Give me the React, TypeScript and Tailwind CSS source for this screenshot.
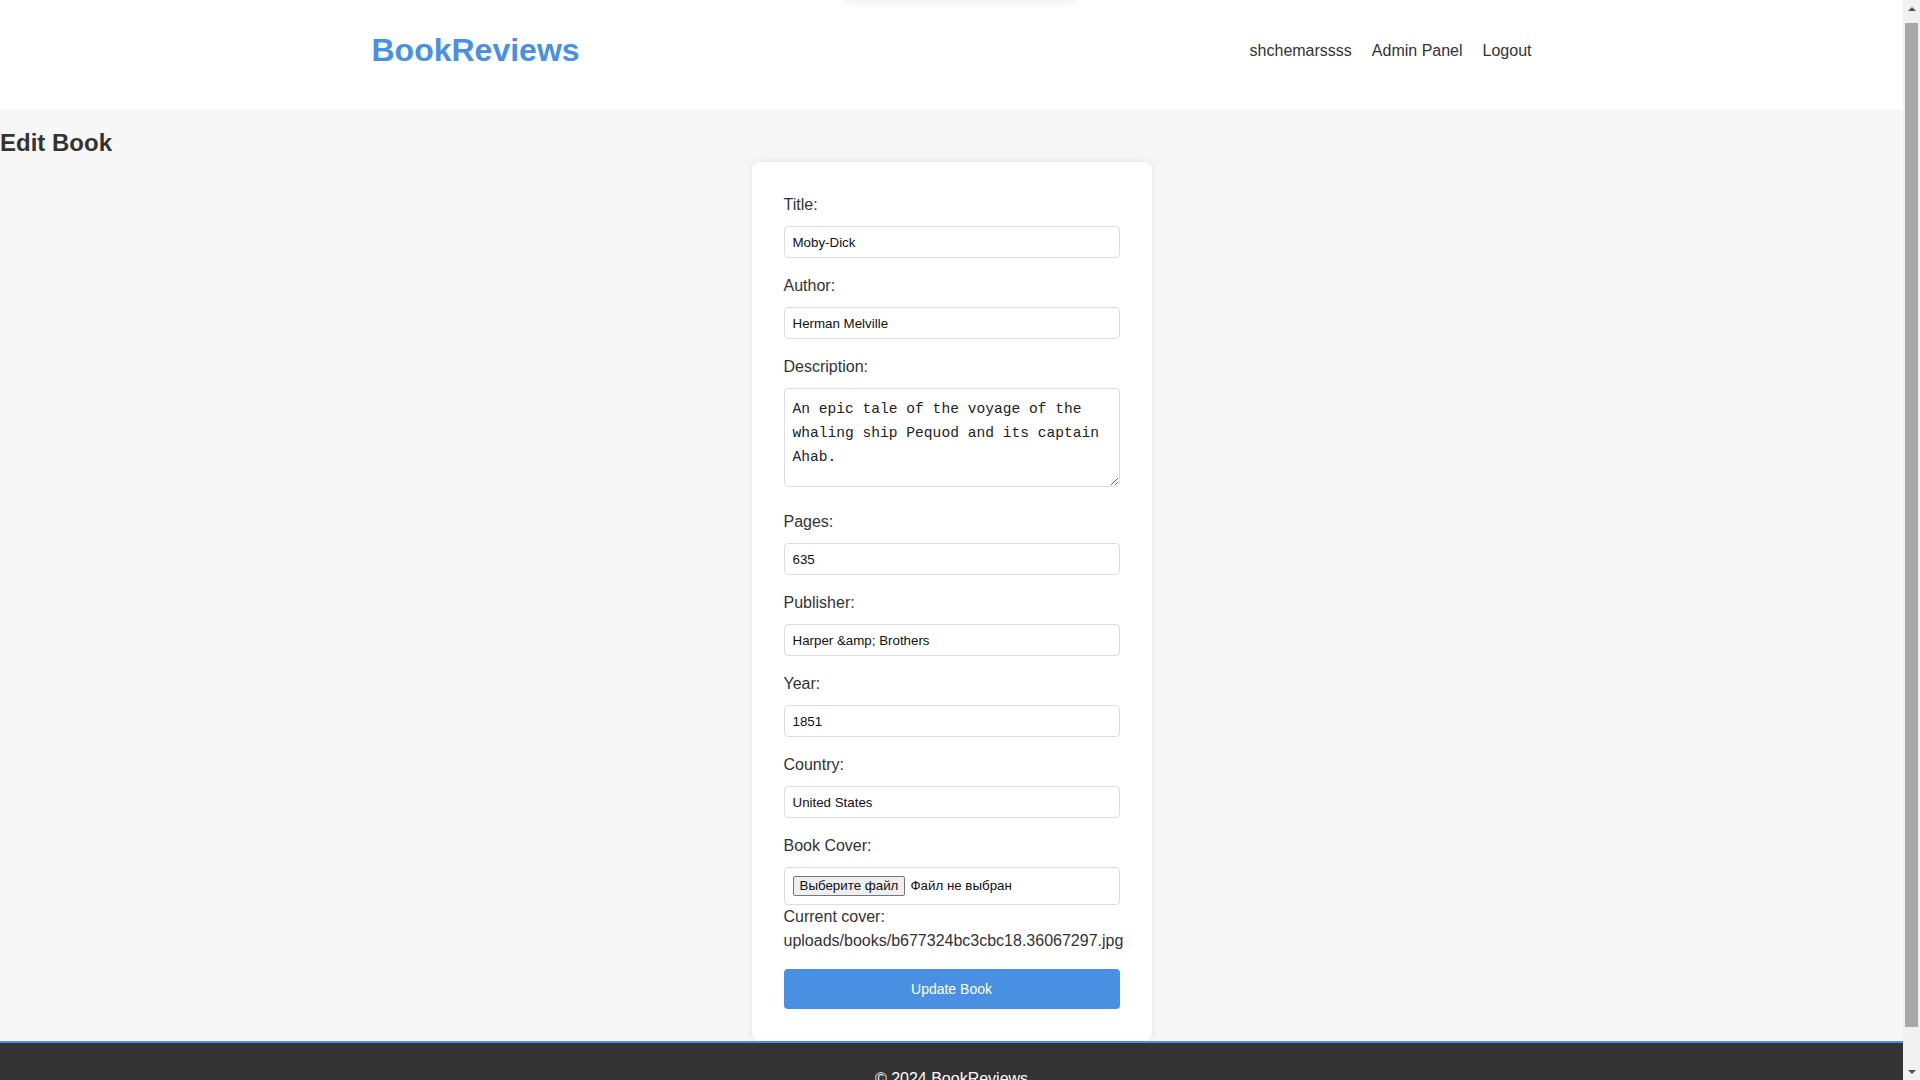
import React from 'react';

const fields = [
  { label: 'Title:', value: 'Moby-Dick' },
  { label: 'Author:', value: 'Herman Melville' },
];

const fields2 = [
  { label: 'Pages:', value: '635' },
  { label: 'Publisher:', value: 'Harper &amp; Brothers' },
  { label: 'Year:', value: '1851' },
  { label: 'Country:', value: 'United States' },
];

function Field({ label, value }: { label: string; value: string }) {
  return (
    <div className="mb-4">
      <label className="block text-base leading-6 mb-[9px] text-[#333]">{label}</label>
      <input
        type="text"
        defaultValue={value}
        className="block w-full h-8 px-2 border border-[#ddd] rounded text-[13.33px] text-[#111] outline-none bg-white"
      />
    </div>
  );
}

// classic window scrollbar, the page is a bit taller than the viewport
function Scrollbar() {
  return (
    <aside className="w-[17px] h-screen bg-[#f1f1f1] flex flex-col items-center shrink-0">
      <div className="h-[17px] flex items-center justify-center">
        <div className="w-0 h-0 border-l-[4px] border-r-[4px] border-b-[4px] border-l-transparent border-r-transparent border-b-[#505050]" />
      </div>
      <div className="w-[13px] h-[1004px] mt-[6px] bg-[#a8a8a8]" />
      <div className="flex-1" />
      <div className="h-[17px] flex items-center justify-center">
        <div className="w-0 h-0 border-l-[4px] border-r-[4px] border-t-[4px] border-l-transparent border-r-transparent border-t-[#505050]" />
      </div>
    </aside>
  );
}

export default function App() {
  return (
    <div
      className="flex h-screen overflow-hidden bg-[#f7f7f7] text-[#333]"
      style={{ fontFamily: '"Liberation Sans", Arial, sans-serif' }}
    >
      <div className="relative flex-1 h-screen overflow-y-auto">
        {/* faint shadow of something above the fold */}
        <div className="absolute left-[843px] top-[-20px] w-[234px] h-[20px] bg-white shadow-[0_2px_8px_rgba(0,0,0,0.07)] z-10" />

        {/* Header */}
        <header className="bg-white h-[109px]">
          <div className="max-w-[1200px] mx-auto px-5 pt-[32px] flex items-center justify-between">
            <a className="text-[32px] font-bold text-[#4a90e2] leading-[37px]">BookReviews</a>
            <nav className="flex items-center gap-5 text-base text-[#333]">
              <a>shchemarssss</a>
              <a>Admin Panel</a>
              <a>Logout</a>
            </nav>
          </div>
        </header>

        <main>
          <h2 className="text-2xl font-bold leading-9 mt-4 mb-px text-[#333]">Edit Book</h2>

          <div className="w-[400px] mx-auto bg-white rounded-lg shadow-[0_0_10px_rgba(0,0,0,0.08)] px-8 pt-[31px] pb-8">
            {fields.map((f) => (
              <Field key={f.label} {...f} />
            ))}

            <div className="mb-[23px]">
              <label className="block text-base leading-6 mb-[9px] text-[#333]">Description:</label>
              <textarea
                defaultValue="An epic tale of the voyage of the whaling ship Pequod and its captain Ahab."
                className="block w-full h-[99px] px-2 py-2 border border-[#ddd] rounded text-[14.6px] leading-6 text-[#222] outline-none bg-white"
                style={{ fontFamily: '"Liberation Mono", monospace', resize: 'vertical' }}
              />
            </div>

            {fields2.map((f) => (
              <Field key={f.label} {...f} />
            ))}

            <div className="mb-4">
              <label className="block text-base leading-6 mb-[9px] text-[#333]">Book Cover:</label>
              <div className="flex items-center h-[38px] px-2 border border-[#ddd] rounded text-[13.33px] text-[#111] bg-white">
                <span className="h-5 px-[6px] flex items-center border border-[#767676] rounded-[2px] bg-[#efefef] leading-none">
                  Выберите файл
                </span>
                <span className="ml-[5px]">Файл не выбран</span>
              </div>
              <p className="text-base leading-6 text-[#333] whitespace-nowrap">
                Current cover:
                <br />
                uploads/books/b677324bc3cbc18.36067297.jpg
              </p>
            </div>

            <button className="block w-full h-10 bg-[#4a90e2] text-white text-[14px] rounded">
              Update Book
            </button>
          </div>
        </main>

        <footer className="bg-[#333] border-t-2 border-[#4a90e2] text-white text-center pt-6 pb-[35px]">
          <p className="text-base leading-6">© 2024 BookReviews</p>
        </footer>
      </div>
      <Scrollbar />
    </div>
  );
}
